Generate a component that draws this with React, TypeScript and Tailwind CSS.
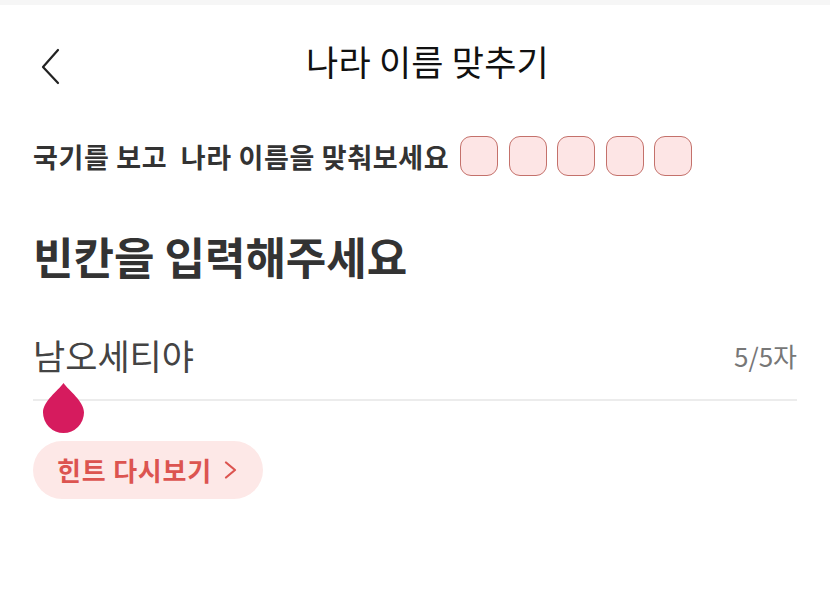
import React from "react";

const font = { fontFamily: '"Noto Sans CJK KR", "Noto Sans", sans-serif' };

export default function App() {
  return (
    <div className="w-[830px] h-[596px] bg-white overflow-hidden" style={font}>
      <div className="h-[5px] bg-[#f6f6f6]" />
      <div className="relative h-[118px] flex items-center justify-center pl-[25px] pb-[1px]">
        <svg className="absolute left-[38px] top-[42px]" width="24" height="38" viewBox="0 0 24 38" fill="none">
          <path d="M20 3 L5 20 L20 36" stroke="#222" strokeWidth="2.2" strokeLinecap="round" strokeLinejoin="round" />
        </svg>
        <div className="text-[35px] leading-none text-[#111] tracking-[0.2px] -mt-[6px]">나라 이름 맞추기</div>
      </div>
      <div className="px-[33px]">
        <div className="flex items-center h-[40px] mt-[13px]">
          <div className="text-[27px] font-bold text-[#333] tracking-[0.65px] leading-none whitespace-pre">국기를 보고  나라 이름을 맞춰보세요</div>
          <div className="flex gap-[10.5px] ml-[11px]">
            {[0, 1, 2, 3, 4].map((i) => (
              <div key={i} className="w-[38px] h-[40px] rounded-[11px] border-[1.5px] border-[#c4716b] bg-[#fde5e5]" />
            ))}
          </div>
        </div>
        <div className="mt-[58px] text-[44px] font-bold text-[#333] leading-none">빈칸을 입력해주세요</div>
        <div className="relative mt-[56px]">
          <div className="flex items-end justify-between h-[40px] pb-[2px]">
            <div className="text-[35px] text-[#444] leading-none">남오세티야</div>
            <div className="text-[26px] text-[#777] leading-none mb-[3px]">5/5자</div>
          </div>
          <div className="h-[1.5px] bg-[#ececec] mt-[25px]" />
          <svg className="absolute left-[10px] top-[49px]" width="41" height="50" viewBox="0 0 41 50">
            <path d="M20.5 0 C 26 8, 41 18, 41 29.5 A 20.5 20.5 0 0 1 0 29.5 C 0 18, 15 8, 20.5 0 Z" fill="#d61b5e" />
          </svg>
        </div>
        <div className="mt-[40px] inline-flex items-center h-[58px] w-[230px] rounded-full bg-[#fde8e7] pl-[24px]">
          <span className="text-[26px] font-bold text-[#dc5450] leading-none tracking-[0.8px]">힌트 다시보기</span>
          <svg className="ml-[12px]" width="14" height="18" viewBox="0 0 14 18" fill="none">
            <path d="M2 1.5 L11 9 L2 16.5" stroke="#dc5450" strokeWidth="2.2" strokeLinecap="round" strokeLinejoin="round" />
          </svg>
        </div>
      </div>
    </div>
  );
}
